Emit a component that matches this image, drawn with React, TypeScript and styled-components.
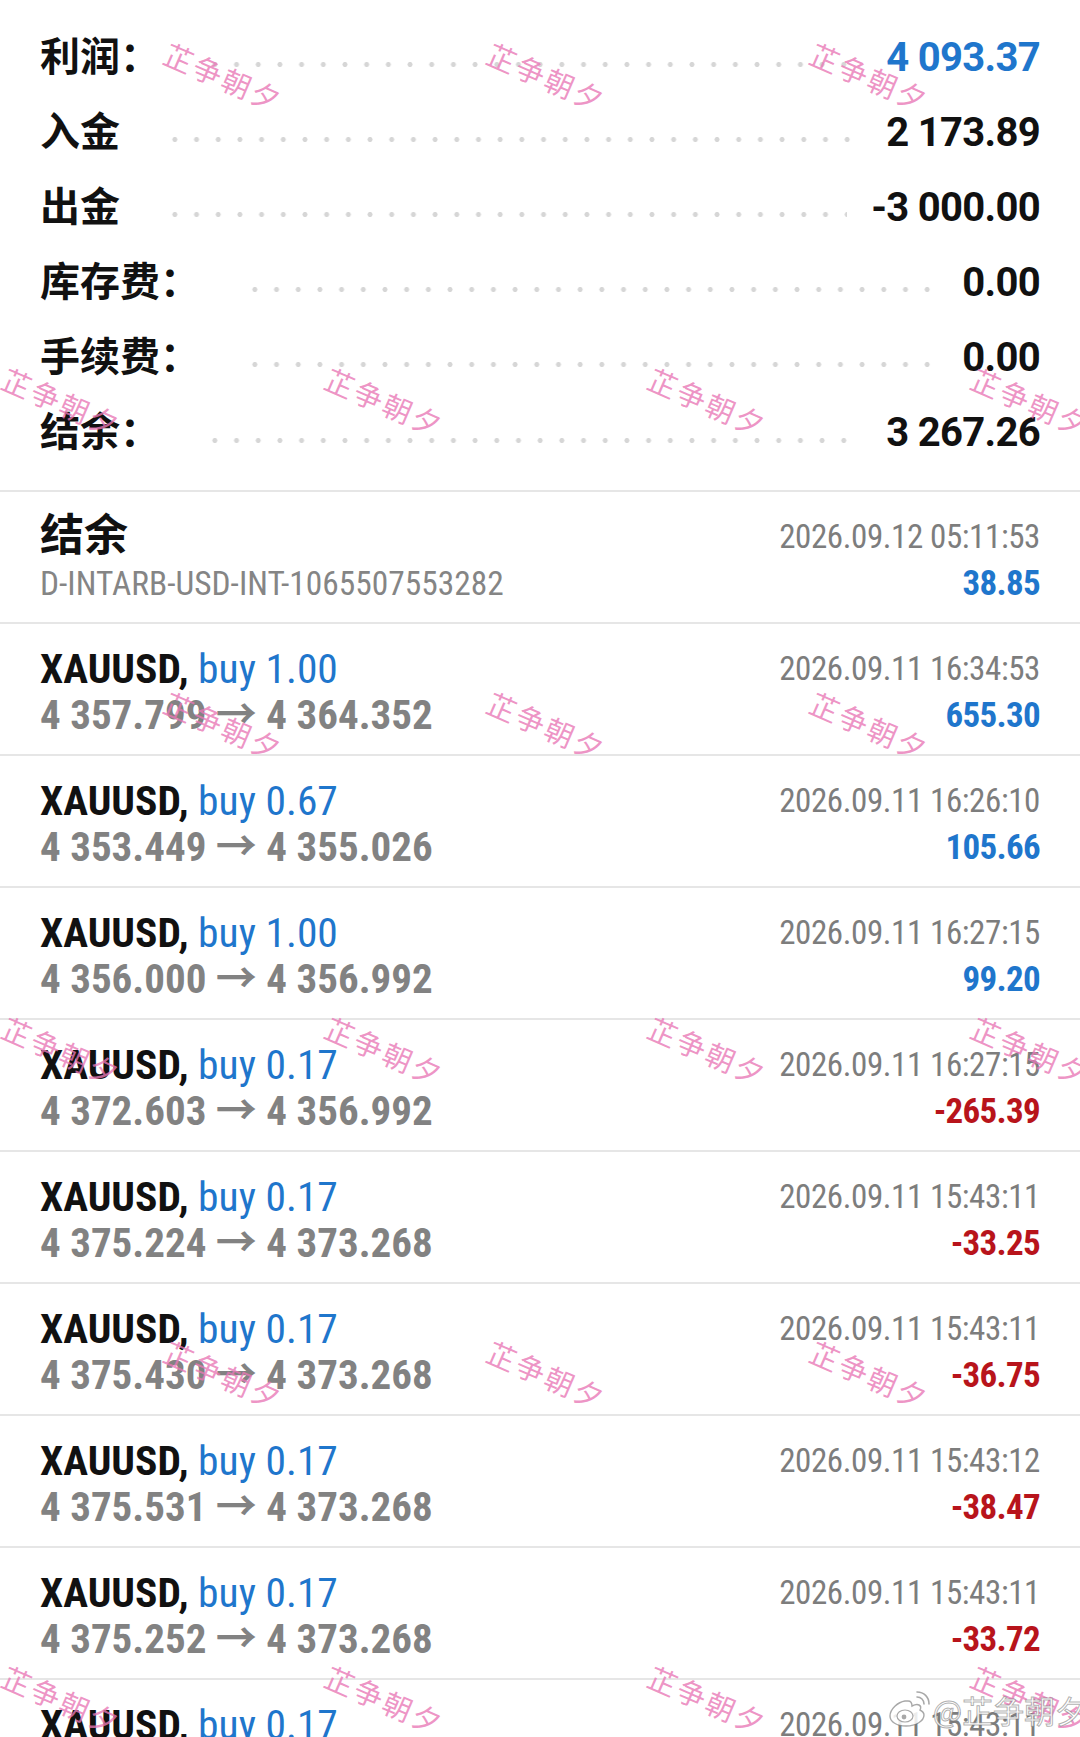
import React from "react";
import styled, { createGlobalStyle } from "styled-components";

const GlobalStyle = createGlobalStyle`
  html, body { margin: 0; padding: 0; background: #ffffff; }
  body { font-family: Roboto, "Noto Sans CJK SC", sans-serif; }
`;

const COND = `"Roboto Condensed", "Liberation Sans Narrow", Roboto, "Noto Sans CJK SC", sans-serif`;

const Page = styled.div`
  position: relative;
  width: 1080px;
  height: 1737px;
  overflow: hidden;
  background: #fff;
`;

const Summary = styled.section`
  display: flex;
  flex-direction: column;
  padding: 19.5px 40px 20px;
`;

const SummaryRow = styled.div`
  display: flex;
  align-items: baseline;
  height: 75.1px;
`;

const Label = styled.span`
  font-family: Roboto, "Noto Sans CJK SC", sans-serif;
  font-weight: 700;
  font-size: 40px;
  line-height: 75px;
  color: #111;
  white-space: nowrap;
`;

const Dots = styled.span`
  flex: 1;
  align-self: center;
  height: 5px;
  margin: 15px 24px 0 44px;
  background-image: radial-gradient(circle at center, #d6d6d6 2.2px, rgba(255, 255, 255, 0) 2.8px);
  background-size: 21.7px 5px;
  background-repeat: repeat-x;
`;

const Value = styled.span<{ $blue?: boolean }>`
  font-family: Roboto, sans-serif;
  font-weight: 700;
  font-size: 40px;
  letter-spacing: -0.7px;
  line-height: 75px;
  color: ${(p) => (p.$blue ? "#1f76cc" : "#111")};
  white-space: nowrap;
`;

const Row = styled.div`
  box-sizing: border-box;
  height: 132px;
  display: flex;
  justify-content: space-between;
  border-top: 2px solid #e6e6e6;
  padding: 21px 40px 0;
`;

const Col = styled.div<{ $right?: boolean }>`
  display: flex;
  flex-direction: column;
  align-items: ${(p) => (p.$right ? "flex-end" : "flex-start")};
`;

const Title = styled.div`
  font-family: Roboto, "Noto Sans CJK SC", sans-serif;
  font-weight: 700;
  font-size: 44px;
  line-height: 47px;
  color: #111;
`;

const Account = styled.div`
  font-family: ${COND};
  font-size: 33.4px;
  line-height: 47px;
  color: #858585;
  white-space: nowrap;
`;

const Line1 = styled.div`
  font-family: ${COND};
  font-size: 41.5px;
  line-height: 47px;
  white-space: nowrap;
`;

const Sym = styled.span`
  font-weight: 700;
  color: #111;
`;

const Side = styled.span`
  font-weight: 400;
  color: #1f76cc;
`;

const Prices = styled.div`
  font-family: ${COND};
  font-weight: 700;
  font-size: 41px;
  line-height: 47px;
  color: #828282;
  white-space: nowrap;
`;

const Time = styled.div`
  font-family: ${COND};
  font-size: 33px;
  letter-spacing: -0.4px;
  line-height: 47px;
  color: #7d7d7d;
  white-space: nowrap;
`;

const Amount = styled.div<{ $neg?: boolean }>`
  font-family: ${COND};
  font-weight: 700;
  font-size: 35px;
  letter-spacing: -0.7px;
  line-height: 47px;
  color: ${(p) => (p.$neg ? "#b8141b" : "#1f76cc")};
  white-space: nowrap;
`;

const Overlay = styled.div`
  position: absolute;
  inset: 0;
  pointer-events: none;
`;

const Mark = styled.span`
  position: absolute;
  transform: translate(-50%, -50%) rotate(23.5deg);
  font-family: "Noto Sans CJK SC", sans-serif;
  font-weight: 400;
  font-size: 29px;
  letter-spacing: 2.5px;
  line-height: 30px;
  color: rgba(233, 120, 182, 0.78);
  white-space: nowrap;
`;

const Weibo = styled.div`
  position: absolute;
  right: -6px;
  bottom: 8px;
  display: flex;
  align-items: center;
  gap: 2px;
`;

const WeiboText = styled.span`
  font-family: "Noto Sans CJK SC", sans-serif;
  font-size: 31px;
  line-height: 36px;
  color: rgba(255, 255, 255, 0.9);
  -webkit-text-stroke: 1px rgba(110, 110, 110, 0.55);
  white-space: nowrap;
`;

const summary = [
  { label: "利润：", value: "4 093.37", blue: true },
  { label: "入金", value: "2 173.89" },
  { label: "出金", value: "-3 000.00" },
  { label: "库存费：", value: "0.00" },
  { label: "手续费：", value: "0.00" },
  { label: "结余：", value: "3 267.26" },
];

const trades = [
  { vol: "1.00", p: "4 357.799 → 4 364.352", t: "2026.09.11 16:34:53", a: "655.30" },
  { vol: "0.67", p: "4 353.449 → 4 355.026", t: "2026.09.11 16:26:10", a: "105.66" },
  { vol: "1.00", p: "4 356.000 → 4 356.992", t: "2026.09.11 16:27:15", a: "99.20" },
  { vol: "0.17", p: "4 372.603 → 4 356.992", t: "2026.09.11 16:27:15", a: "-265.39" },
  { vol: "0.17", p: "4 375.224 → 4 373.268", t: "2026.09.11 15:43:11", a: "-33.25" },
  { vol: "0.17", p: "4 375.430 → 4 373.268", t: "2026.09.11 15:43:11", a: "-36.75" },
  { vol: "0.17", p: "4 375.531 → 4 373.268", t: "2026.09.11 15:43:12", a: "-38.47" },
  { vol: "0.17", p: "4 375.252 → 4 373.268", t: "2026.09.11 15:43:11", a: "-33.72" },
  { vol: "0.17", p: "4 375.318 → 4 373.268", t: "2026.09.11 15:43:11", a: "-34.80" },
];

const marks: { x: number; y: number }[] = [];
for (let r = 0; r < 6; r++) {
  const y = 76 + r * 324.6;
  const xs = r % 2 === 0 ? [224, 547, 870] : [62, 385, 708, 1031];
  xs.forEach((x) => marks.push({ x, y }));
}

const WeiboLogo = () => (
  <svg width="44" height="38" viewBox="0 0 44 38" fill="none">
    <path
      d="M18 10c-7 1-15 8-15 15 0 6 7 10 16 10 10 0 18-5 18-11 0-3-2-4-4-5 1-2 1-4-1-5-2-1-5 0-7 1 0-3-1-5-4-5-1 0-2 0-3 0z"
      fill="rgba(255,255,255,0.85)"
      stroke="rgba(110,110,110,0.6)"
      strokeWidth="1.4"
    />
    <ellipse cx="18" cy="25" rx="8" ry="6" fill="rgba(255,255,255,0.9)" stroke="rgba(110,110,110,0.6)" strokeWidth="1.2" />
    <circle cx="17" cy="26" r="2.4" fill="rgba(110,110,110,0.6)" />
    <path d="M30 6c4 0 7 3 7 7" stroke="rgba(110,110,110,0.6)" strokeWidth="1.6" strokeLinecap="round" />
    <path d="M30 1c7 0 12 5 12 12" stroke="rgba(110,110,110,0.6)" strokeWidth="1.6" strokeLinecap="round" />
  </svg>
);

export default function App() {
  return (
    <Page>
      <GlobalStyle />
      <Summary>
        {summary.map((s) => (
          <SummaryRow key={s.label}>
            <Label>{s.label}</Label>
            <Dots />
            <Value $blue={s.blue}>{s.value}</Value>
          </SummaryRow>
        ))}
      </Summary>
      <Row>
        <Col>
          <Title>结余</Title>
          <Account>D-INTARB-USD-INT-1065507553282</Account>
        </Col>
        <Col $right>
          <Time>2026.09.12 05:11:53</Time>
          <Amount>38.85</Amount>
        </Col>
      </Row>
      {trades.map((t, i) => (
        <Row key={i}>
          <Col>
            <Line1>
              <Sym>XAUUSD,</Sym> <Side>buy {t.vol}</Side>
            </Line1>
            <Prices>{t.p}</Prices>
          </Col>
          <Col $right>
            <Time>{t.t}</Time>
            <Amount $neg={t.a.startsWith("-")}>{t.a}</Amount>
          </Col>
        </Row>
      ))}
      <Overlay>
        {marks.map((m, i) => (
          <Mark key={i} style={{ left: m.x, top: m.y }}>
            芷争朝夕
          </Mark>
        ))}
        <Weibo>
          <WeiboLogo />
          <WeiboText>@芷争朝夕</WeiboText>
        </Weibo>
      </Overlay>
    </Page>
  );
}
